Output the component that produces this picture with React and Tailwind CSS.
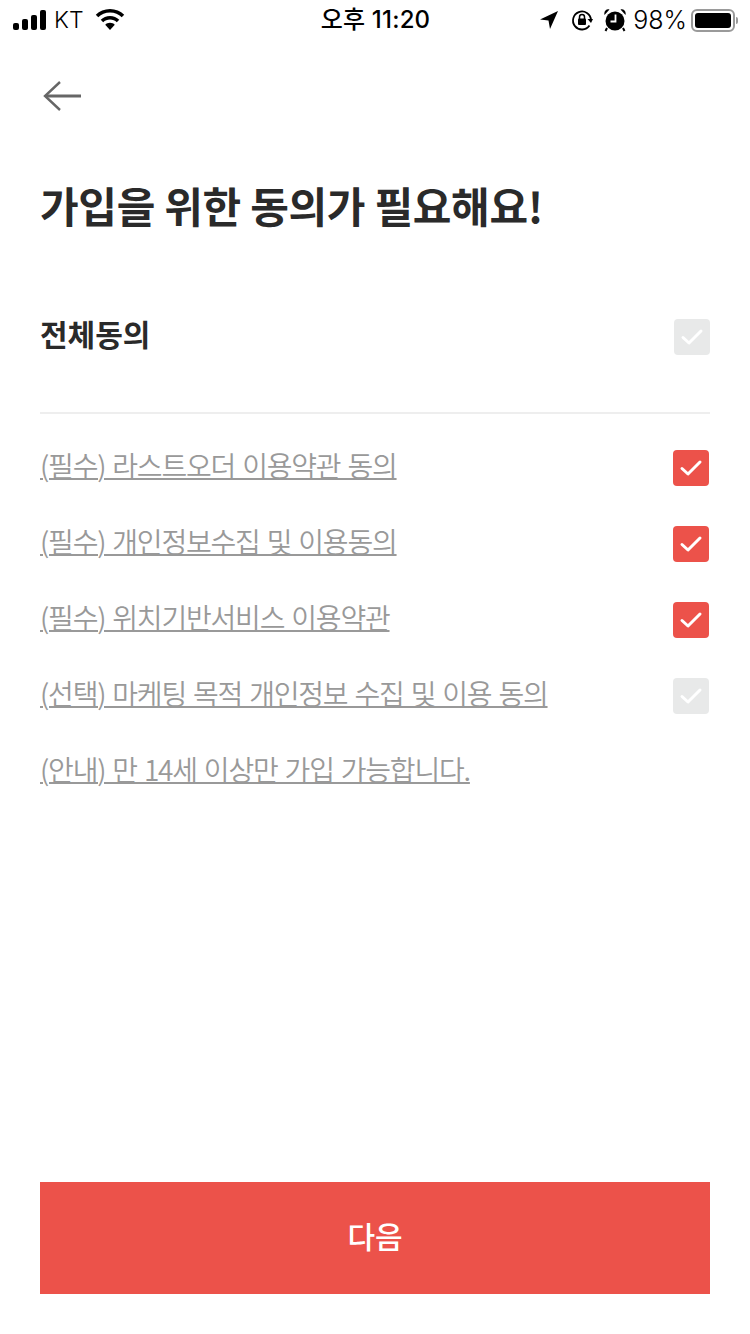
const terms = [
  { label: '(필수) 라스트오더 이용약관 동의', checked: true },
  { label: '(필수) 개인정보수집 및 이용동의', checked: true },
  { label: '(필수) 위치기반서비스 이용약관', checked: true },
  { label: '(선택) 마케팅 목적 개인정보 수집 및 이용 동의', checked: false },
]

function CheckBox({ on }) {
  return (
    <span className={`flex h-9 w-9 items-center justify-center rounded-[4px] ${on ? 'bg-[#ec524a]' : 'bg-[#e8e9e9]'}`}>
      <svg width="24" height="20" viewBox="0 0 24 20" fill="none" stroke="white" strokeWidth="3" strokeLinecap="round" strokeLinejoin="round">
        <path d="M3 10.500L9 16L21 4" />
      </svg>
    </span>
  )
}

function StatusBar() {
  return (
    <div className="flex h-10 items-center justify-between pl-[13px] pr-[12px] text-[25px] leading-none text-black">
      <div className="flex w-[240px] items-center">
        <svg width="34" height="20" viewBox="0 0 34 20" fill="currentColor">
          <rect x="0" y="13" width="6" height="7" rx="2" />
          <rect x="9" y="9" width="6" height="11" rx="2" />
          <rect x="18" y="5" width="6" height="15" rx="2" />
          <rect x="27" y="0" width="6" height="20" rx="2" />
        </svg>
        <span className="ml-[7px] font-['Inter',sans-serif] text-[23px] font-light">KT</span>
        <svg className="ml-[11px]" width="30" height="22" viewBox="0 0 32 24" fill="currentColor">
          <path d="M16 0C10 0 4.500 2.400 0.500 6.300L3.200 9.100C6.500 5.900 11 3.900 16 3.900C21 3.900 25.500 5.900 28.800 9.100L31.500 6.300C27.500 2.400 22 0 16 0Z" />
          <path d="M16 7.500C12.100 7.500 8.500 9.100 5.900 11.600L8.600 14.400C10.500 12.600 13.100 11.400 16 11.400C18.900 11.400 21.500 12.600 23.400 14.400L26.100 11.600C23.500 9.100 19.900 7.500 16 7.500Z" />
          <path d="M16 15C14 15 12.100 15.800 10.800 17.100L16 23L21.200 17.100C19.900 15.800 18 15 16 15Z" />
        </svg>
      </div>
      <span className="font-['Inter','Noto_Sans_CJK_KR',sans-serif] text-[24px] font-medium tracking-[0.2px]">오후 11:20</span>
      <div className="flex w-[240px] items-center justify-end">
        <svg width="20" height="20" viewBox="0 0 20 20" fill="currentColor">
          <path d="M19 1L1 9.500L9.500 10.500L11 19Z" />
        </svg>
        <svg className="ml-[12px]" width="22" height="22" viewBox="0 0 22 22" fill="none" stroke="currentColor" strokeWidth="1.800">
          <path d="M18.500 16.500A9 9 0 1 1 20 11" />
          <path d="M16.500 10L20 14L22 10" fill="currentColor" stroke="none" />
          <rect x="7" y="9.500" width="8" height="6.500" rx="1" fill="currentColor" stroke="none" />
          <path d="M8.500 10V8A2.500 2.500 0 0 1 13.500 8V10" strokeWidth="1.500" />
        </svg>
        <svg className="ml-[11px]" width="22" height="24" viewBox="0 0 22 24" fill="currentColor">
          <circle cx="11" cy="13" r="9.500" />
          <path d="M0.500 7L5.500 1.500C2.500 0.500 -0.500 3 0.500 7ZM21.500 7L16.500 1.500C19.500 0.500 22.500 3 21.500 7Z" />
          <path d="M3 20L1.500 23M19 20L20.500 23" stroke="currentColor" strokeWidth="2" />
          <path d="M11.500 6.500V13.500H6.500" fill="none" stroke="white" strokeWidth="1.800" />
        </svg>
        <span className="ml-[7px] font-['Inter',sans-serif] text-[25px] font-light">98%</span>
        <span className="ml-[4px] flex h-[23px] w-[44px] items-center rounded-[6px] border-2 border-[#9a9a9a] p-[2px]">
          <span className="h-full w-full rounded-[3px] bg-black" />
        </span>
        <span className="ml-[1px] h-[7px] w-[2px] rounded-r bg-[#9a9a9a]" />
      </div>
    </div>
  )
}

export default function App() {
  return (
    <div className="flex h-[1334px] w-[750px] flex-col bg-white font-['Noto_Sans_CJK_KR',sans-serif]">
      <StatusBar />

      <div className="flex flex-1 flex-col px-10 pb-10">
        <button className="mt-[36px] h-10 w-10 text-[#666666]">
          <svg width="42" height="32" viewBox="0 0 42 32" fill="none" stroke="currentColor" strokeWidth="3">
            <path d="M41 16H6" />
            <path d="M20 2L5 16L20 30" strokeWidth="2.400" />
          </svg>
        </button>

        <h1 className="mt-[59px] text-[42px] font-bold leading-[60px] tracking-[-0.3px] text-[#2a2a2a]">
          가입을 위한 동의가 필요해요!
        </h1>

        <div className="mt-[74px] flex h-[56px] items-center justify-between">
          <span className="pb-2 text-[30px] font-bold text-[#2a2a2a]">전체동의</span>
          <CheckBox on={false} />
        </div>

        <div className="mt-[47px] border-t-2 border-[#eeeeee] pr-px pt-[16px]">
          {terms.map(t => (
            <div key={t.label} className="flex h-[76px] items-center justify-between">
              <span className="pb-[6px] text-[28px] font-[350] leading-[40px] tracking-[-1.2px] text-[#999999] underline decoration-2 [word-spacing:2px]">{t.label}</span>
              <CheckBox on={t.checked} />
            </div>
          ))}
          <div className="flex h-[76px] items-center">
            <span className="pb-[6px] text-[28px] font-[350] leading-[40px] tracking-[-1.2px] text-[#999999] underline decoration-2 [word-spacing:2px]">(안내) 만 14세 이상만 가입 가능합니다.</span>
          </div>
        </div>

        <button className="mt-auto h-28 w-full bg-[#ec524a] pb-[6px] text-[30px] font-medium text-white">다음</button>
      </div>
    </div>
  )
}
